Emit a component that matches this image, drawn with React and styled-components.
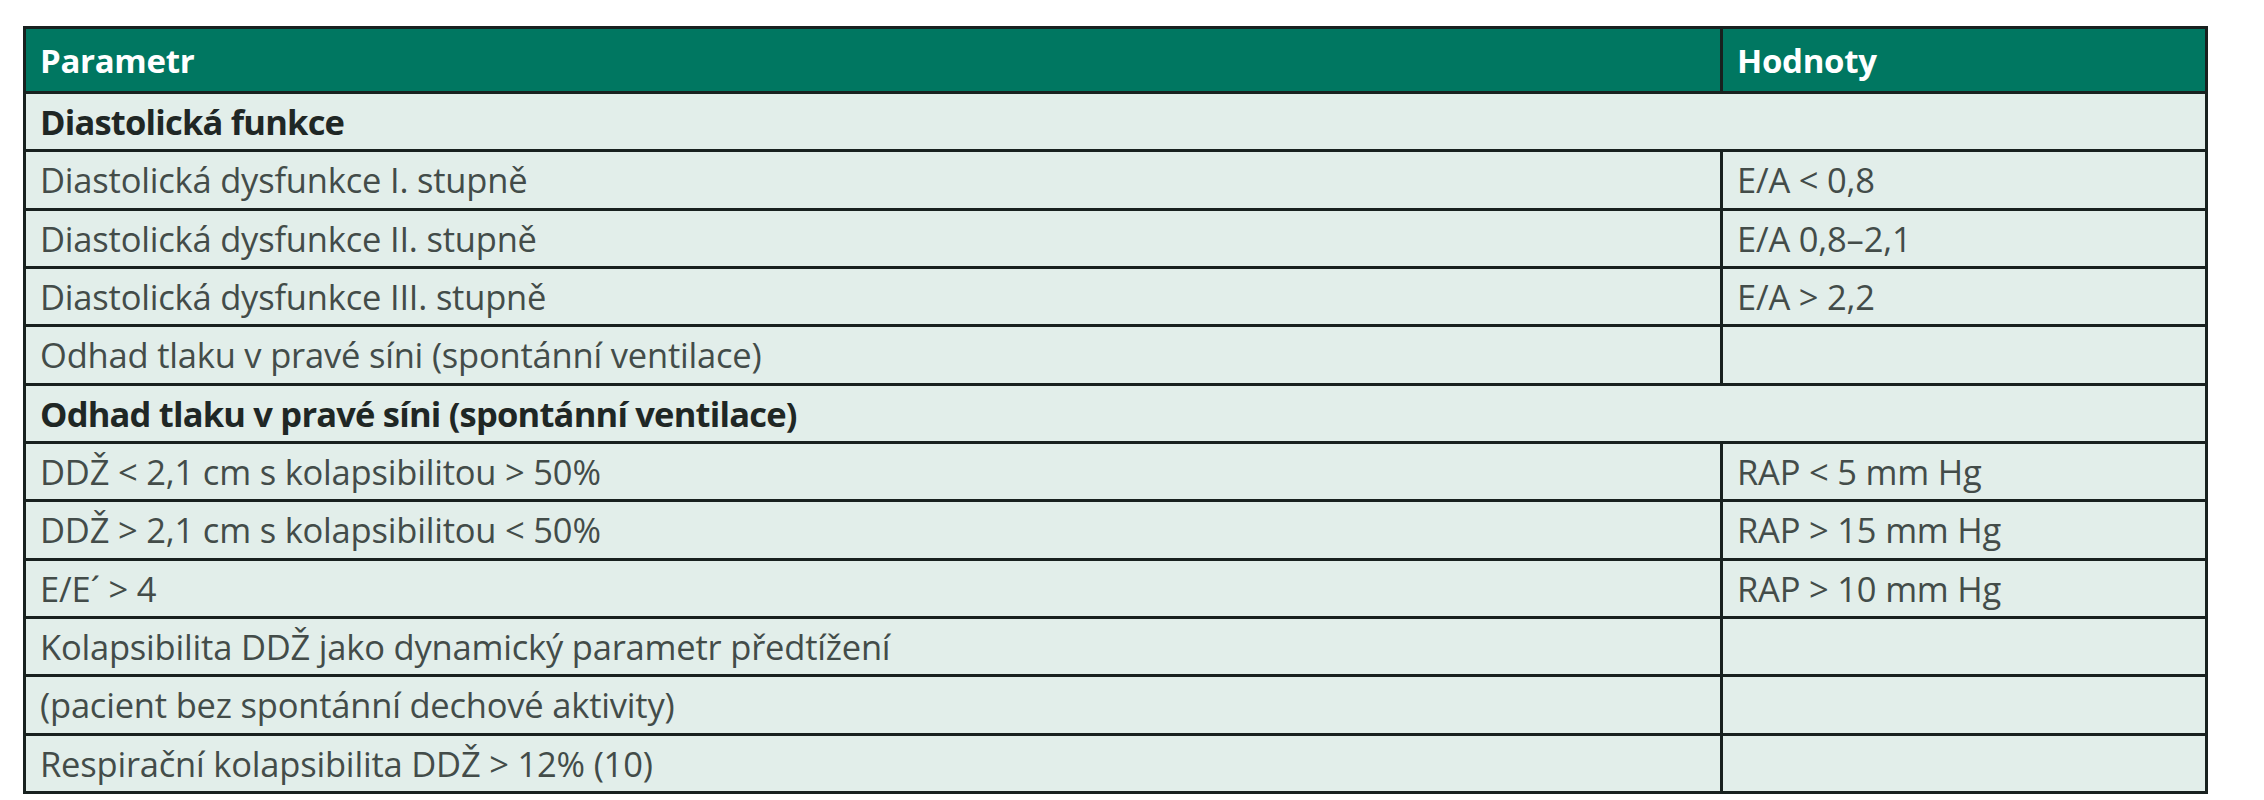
import React from "react";
import styled, { createGlobalStyle } from "styled-components";

const Global = createGlobalStyle`
  html, body { margin: 0; padding: 0; background: #ffffff; }
  body { font-family: "Open Sans", "Liberation Sans", sans-serif; }
`;

const Page = styled.div`
  padding: 26px 0 0 23px;
  width: 2264px;
  height: 800px;
  box-sizing: border-box;
  background: #ffffff;
`;

const Table = styled.div`
  width: 2185px;
  box-sizing: border-box;
  border: 3px solid #18211f;
  background: #e2eeea;
`;

const Row = styled.div`
  display: grid;
  grid-template-columns: ${(p) => (p.$span ? "1fr" : "1694px 1fr")};
  height: ${(p) => (p.$head ? "62px" : "55.33px")};
  border-top: ${(p) => (p.$first ? "none" : "3px solid #18211f")};
  background: ${(p) => (p.$head ? "#007761" : "#e2eeea")};
`;

const Cell = styled.div`
  display: flex;
  align-items: center;
  padding: 0 14px;
  box-sizing: border-box;
  font-size: ${(p) => (p.$head ? "33px" : "34.5px")};
  letter-spacing: ${(p) => (p.$head ? "-0.3px" : p.$bold ? "-0.8px" : "-0.2px")};
  white-space: nowrap;
  color: ${(p) => (p.$head ? "#ffffff" : p.$bold ? "#1f2725" : "#434c49")};
  font-weight: ${(p) => (p.$head || p.$bold ? 700 : 400)};
  border-left: ${(p) => (p.$value ? "3px solid #18211f" : "none")};
`;

const rows = [
  { section: "Diastolická funkce" },
  { p: "Diastolická dysfunkce I. stupně", v: "E/A < 0,8" },
  { p: "Diastolická dysfunkce II. stupně", v: "E/A 0,8–2,1" },
  { p: "Diastolická dysfunkce III. stupně", v: "E/A > 2,2" },
  { p: "Odhad tlaku v pravé síni (spontánní ventilace)", v: "" },
  { section: "Odhad tlaku v pravé síni (spontánní ventilace)" },
  { p: "DDŽ < 2,1 cm s kolapsibilitou > 50%", v: "RAP < 5 mm Hg" },
  { p: "DDŽ > 2,1 cm s kolapsibilitou < 50%", v: "RAP > 15 mm Hg" },
  { p: "E/E´ > 4", v: "RAP > 10 mm Hg" },
  { p: "Kolapsibilita DDŽ jako dynamický parametr předtížení", v: "" },
  { p: "(pacient bez spontánní dechové aktivity)", v: "" },
  { p: "Respirační kolapsibilita DDŽ > 12% (10)", v: "" },
];

export default function App() {
  return (
    <>
      <Global />
      <Page>
        <Table>
          <Row $head $first>
            <Cell $head>Parametr</Cell>
            <Cell $head $value>Hodnoty</Cell>
          </Row>
          {rows.map((r, i) =>
            r.section ? (
              <Row key={i} $span>
                <Cell $bold>{r.section}</Cell>
              </Row>
            ) : (
              <Row key={i}>
                <Cell>{r.p}</Cell>
                <Cell $value>{r.v}</Cell>
              </Row>
            )
          )}
        </Table>
      </Page>
    </>
  );
}
